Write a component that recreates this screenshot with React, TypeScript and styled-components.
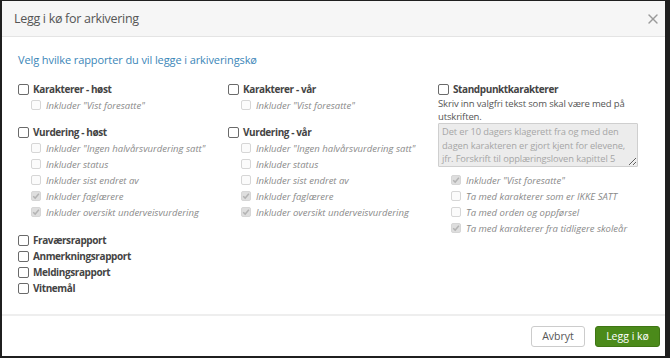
import React from 'react';
import styled, { createGlobalStyle } from 'styled-components';
import { X } from 'lucide-react';

const GlobalStyle = createGlobalStyle`
  html, body {
    margin: 0;
    padding: 0;
    background: #fff;
  }
  body {
    font-family: "Open Sans", "Liberation Sans", sans-serif;
  }
`;

const Frame = styled.div`
  width: 670px;
  height: 358px;
  box-sizing: border-box;
  border-style: solid;
  border-color: #1f1f1f;
  border-width: 1px 5px 2px 2px;
  display: flex;
  flex-direction: column;
  background: #fff;
`;

const Header = styled.div`
  height: 36px;
  flex-shrink: 0;
  box-sizing: border-box;
  background: #f6f6f6;
  border-bottom: 1px solid #e4e4e4;
  display: flex;
  align-items: center;
  justify-content: space-between;
  padding: 0 4px 0 12px;
`;

const Title = styled.h1`
  margin: 0;
  font-size: 12.5px;
  letter-spacing: -0.3px;
  font-weight: 400;
  color: #555;
`;

const CloseButton = styled.button`
  border: none;
  background: none;
  padding: 0;
  display: grid;
  place-items: center;
  color: #9a9a9a;
  cursor: pointer;
`;

const Body = styled.div`
  flex: 1;
  padding: 15px 16px 0 16px;
`;

const Intro = styled.p`
  margin: 0 0 14px 0;
  font-size: 11px;
  letter-spacing: -0.1px;
  color: #3b86b8;
`;

const Columns = styled.div`
  display: grid;
  grid-template-columns: 210px 210px 1fr;
  align-items: start;
`;

const Column = styled.div`
  display: flex;
  flex-direction: column;
  gap: 11px;
`;

const Group = styled.div`
  display: flex;
  flex-direction: column;
`;

const Row = styled.label<{ $sub?: boolean }>`
  display: flex;
  align-items: center;
  gap: ${(p) => (p.$sub ? '5px' : '4px')};
  height: 16px;
  padding-left: ${(p) => (p.$sub ? '13px' : '0')};
  font-size: ${(p) => (p.$sub ? '9.5px' : '10px')};
  letter-spacing: ${(p) => (p.$sub ? '0' : '-0.4px')};
  font-weight: ${(p) => (p.$sub ? 400 : 700)};
  font-style: ${(p) => (p.$sub ? 'italic' : 'normal')};
  color: ${(p) => (p.$sub ? '#8a8a8a' : '#444')};
  white-space: nowrap;
`;

const Box = styled.span<{ $sub?: boolean; $checked?: boolean }>`
  box-sizing: border-box;
  width: ${(p) => (p.$sub ? '10px' : '11px')};
  height: ${(p) => (p.$sub ? '10px' : '11px')};
  flex-shrink: 0;
  border-radius: 2px;
  border: 1px solid ${(p) => (p.$sub ? '#d6d6d6' : '#6a6a6a')};
  background: ${(p) => (p.$checked ? '#dedede' : p.$sub ? '#fbfbfb' : '#fff')};
  display: grid;
  place-items: center;
`;

const Description = styled.p`
  margin: 0;
  font-size: 9.5px;
  letter-spacing: -0.15px;
  line-height: 13px;
  color: #555;
`;

const Note = styled.textarea`
  display: block;
  width: 200px;
  height: 44px;
  box-sizing: border-box;
  resize: vertical;
  margin: 0 0 5px 0;
  padding: 1px 3px;
  font-family: inherit;
  font-size: 9.3px;
  letter-spacing: -0.1px;
  line-height: 13.5px;
  color: #a6a6a6;
  background: #ececec;
  border: 1px solid #cfcfcf;
  border-radius: 1px;
  overflow: hidden;
`;

const Misc = styled.div`
  display: flex;
  flex-direction: column;
  margin-top: 1px;
`;

const Footer = styled.div`
  height: 40px;
  flex-shrink: 0;
  border-top: 2px solid #eeeeee;
  display: flex;
  align-items: center;
  justify-content: flex-end;
  gap: 10px;
  padding: 0 5px 0 0;
`;

const Button = styled.button<{ $primary?: boolean }>`
  height: 21px;
  width: ${(p) => (p.$primary ? '65px' : '54px')};
  padding: 0;
  border-radius: 3px;
  font-family: inherit;
  font-size: 10.5px;
  border: 1px solid ${(p) => (p.$primary ? '#3f7614' : '#cccccc')};
  background: ${(p) => (p.$primary ? '#4b8a1a' : '#fff')};
  color: ${(p) => (p.$primary ? '#fff' : '#555')};
  cursor: pointer;
`;

const Check = () => (
  <svg width="8" height="8" viewBox="0 0 10 10">
    <path d="M1.5 5.2 L4 7.6 L8.6 2.2" fill="none" stroke="#b3b3b3" strokeWidth="1.8" />
  </svg>
);

type Item = { label: string; checked?: boolean };

const Option: React.FC<{ label: string; sub?: boolean; checked?: boolean }> = ({ label, sub, checked }) => (
  <Row $sub={sub}>
    <Box $sub={sub} $checked={checked}>{checked && <Check />}</Box>
    {label}
  </Row>
);

const Section: React.FC<{ title: string; items: Item[] }> = ({ title, items }) => (
  <Group>
    <Option label={title} />
    {items.map((i) => (
      <Option key={i.label} label={i.label} sub checked={i.checked} />
    ))}
  </Group>
);

const vurdering: Item[] = [
  { label: 'Inkluder "Ingen halvårsvurdering satt"' },
  { label: 'Inkluder status' },
  { label: 'Inkluder sist endret av' },
  { label: 'Inkluder faglærere', checked: true },
  { label: 'Inkluder oversikt underveisvurdering', checked: true },
];

const standpunkt: Item[] = [
  { label: 'Inkluder "Vist foresatte"', checked: true },
  { label: 'Ta med karakterer som er IKKE SATT' },
  { label: 'Ta med orden og oppførsel' },
  { label: 'Ta med karakterer fra tidligere skoleår', checked: true },
];

const App: React.FC = () => (
  <>
    <GlobalStyle />
    <Frame>
      <Header>
        <Title>Legg i kø for arkivering</Title>
        <CloseButton aria-label="Lukk">
          <X size={16} strokeWidth={2} />
        </CloseButton>
      </Header>
      <Body>
        <Intro>Velg hvilke rapporter du vil legge i arkiveringskø</Intro>
        <Columns>
          <Column>
            <Section title="Karakterer - høst" items={[{ label: 'Inkluder "Vist foresatte"' }]} />
            <Section title="Vurdering - høst" items={vurdering} />
            <Misc>
              <Option label="Fraværsrapport" />
              <Option label="Anmerkningsrapport" />
              <Option label="Meldingsrapport" />
              <Option label="Vitnemål" />
            </Misc>
          </Column>
          <Column>
            <Section title="Karakterer - vår" items={[{ label: 'Inkluder "Vist foresatte"' }]} />
            <Section title="Vurdering - vår" items={vurdering} />
          </Column>
          <Column>
            <Group>
              <Option label="Standpunktkarakterer" />
              <Description>Skriv inn valgfri tekst som skal være med på utskriften.</Description>
              <Note
                readOnly
                value="Det er 10 dagers klagerett fra og med den dagen karakteren er gjort kjent for elevene, jfr. Forskrift til opplæringsloven kapittel 5"
              />
              {standpunkt.map((i) => (
                <Option key={i.label} label={i.label} sub checked={i.checked} />
              ))}
            </Group>
          </Column>
        </Columns>
      </Body>
      <Footer>
        <Button>Avbryt</Button>
        <Button $primary>Legg i kø</Button>
      </Footer>
    </Frame>
  </>
);

export default App;
